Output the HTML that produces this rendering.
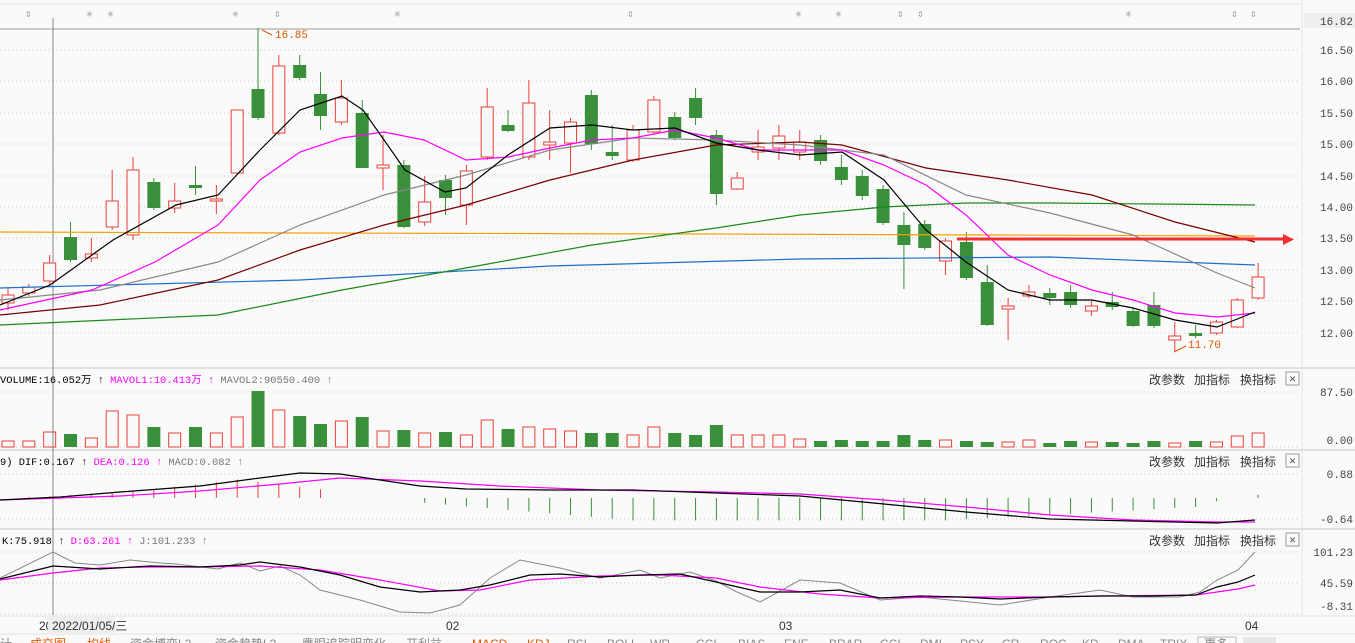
<!DOCTYPE html>
<html><head><meta charset="utf-8">
<style>
body{margin:0;background:#fafafa;width:1355px;height:643px;overflow:hidden;font-family:"Liberation Mono","Noto Sans CJK SC",monospace;}
svg{position:absolute;left:0;top:0}
.t{font-family:"Liberation Mono","Noto Sans CJK SC",monospace;font-size:11px}
.h{font-family:"Liberation Mono","Noto Sans CJK SC",monospace;font-size:10.4px}
.c{font-family:"Liberation Sans","Noto Sans CJK SC",sans-serif;font-size:12px;fill:#333}
</style></head><body>
<svg id="s" width="1355" height="643" xmlns="http://www.w3.org/2000/svg">
<rect width="1355" height="643" fill="#fafafa"/>
<line x1="1302" y1="0" x2="1302" y2="615" stroke="#e4e4e4"/>
<line x1="0" y1="4" x2="1300" y2="4" stroke="#e4e4e4"/>
<line x1="0" y1="29" x2="1300" y2="29" stroke="#999"/>
<line x1="0" y1="368" x2="1355" y2="368" stroke="#e0e0e0" stroke-width="2"/>
<line x1="0" y1="450" x2="1355" y2="450" stroke="#e0e0e0" stroke-width="2"/>
<line x1="0" y1="529" x2="1355" y2="529" stroke="#e0e0e0" stroke-width="2"/>
<line x1="0" y1="616" x2="1355" y2="616" stroke="#e0e0e0"/>
<line x1="0" y1="634" x2="1355" y2="634" stroke="#e0e0e0"/>
<g stroke="#ccc" stroke-dasharray="1,3">
<line x1="0" y1="50" x2="1300" y2="50"/><line x1="0" y1="81" x2="1300" y2="81"/><line x1="0" y1="113" x2="1300" y2="113"/><line x1="0" y1="144" x2="1300" y2="144"/><line x1="0" y1="176" x2="1300" y2="176"/><line x1="0" y1="207" x2="1300" y2="207"/><line x1="0" y1="238" x2="1300" y2="238"/><line x1="0" y1="270" x2="1300" y2="270"/><line x1="0" y1="301" x2="1300" y2="301"/><line x1="0" y1="333" x2="1300" y2="333"/>
<line x1="0" y1="392" x2="1300" y2="392"/><line x1="0" y1="447" x2="1300" y2="447"/>
<line x1="0" y1="474" x2="1300" y2="474"/><line x1="0" y1="519" x2="1300" y2="519"/>
<line x1="0" y1="552" x2="1300" y2="552"/><line x1="0" y1="583" x2="1300" y2="583"/><line x1="0" y1="614" x2="1300" y2="614"/>
</g>
<line x1="53" y1="18" x2="53" y2="615" stroke="#888"/>
<g id="cd"></g>
<g fill="none" stroke-width="1.2">
<polyline stroke="#f5a000" points="0,232 300,233 700,234 1000,235 1255,236"/>
<polyline stroke="#1a6fc8" points="0,288 300,280 550,266 800,259 1050,257 1255,265"/>
<polyline stroke="#1a8a1a" points="0,325 218,315 342,290 466,268 592,245 716,228 800,215 884,207 966,203 1050,203 1255,205"/>
<polyline stroke="#7a0000" points="0,315 100,305 218,280 300,250 384,225 466,205 550,180 633,160 716,145 800,142 842,145 926,168 1008,180 1092,195 1175,222 1255,242"/>
<polyline stroke="#888" points="0,300 100,290 218,262 300,225 384,195 466,175 550,150 633,138 716,140 800,145 884,155 966,195 1050,213 1133,235 1217,273 1255,288"/>
<polyline stroke="#ff00ff" points="0,310 92,290 155,262 218,225 260,180 300,152 342,138 384,132 424,140 466,160 508,157 550,148 592,140 633,138 675,130 716,138 758,150 800,150 842,150 884,165 926,185 966,215 1008,255 1050,275 1092,290 1133,300 1175,313 1217,317 1255,313"/>
<polyline stroke="#000" points="0,305 50,285 113,240 176,205 218,195 260,150 300,110 342,96 363,110 405,170 445,192 466,188 508,155 550,128 592,125 633,130 675,128 716,143 758,150 800,155 842,152 884,180 926,230 966,262 1008,290 1050,300 1092,300 1133,308 1175,320 1217,327 1255,312"/>
</g>
<line x1="957" y1="239" x2="1285" y2="239" stroke="#f03030" stroke-width="3"/>
<polygon points="1283,234 1294,239.5 1283,245" fill="#f03030"/>
<text x="275" y="38" class="t" fill="#e05a00">16.85</text>
<polyline points="262,30 272,35" stroke="#e05a00" fill="none"/>
<text x="1188" y="348" class="t" fill="#e05a00">11.70</text>
<polyline points="1174,352 1186,346" stroke="#e05a00" fill="none"/>
<g class="t" fill="#999" font-size="13">
<text x="25" y="17">⇕</text><text x="86" y="17">✳</text><text x="107" y="17">✳</text><text x="232" y="17">✳</text><text x="274" y="17">⇕</text><text x="394" y="17">✳</text><text x="627" y="17">⇕</text><text x="795" y="17">✳</text><text x="835" y="17">✳</text><text x="897" y="17">⇕</text><text x="917" y="17">⇕</text><text x="1125" y="17">✳</text><text x="1231" y="17">⇕</text><text x="1250" y="17">⇕</text>
</g>
<rect x="1304" y="13" width="51" height="15" fill="#eee"/>
<g class="t" fill="#444" text-anchor="end">
<text x="1353" y="25">16.82</text><text x="1353" y="54">16.50</text><text x="1353" y="85">16.00</text><text x="1353" y="117">15.50</text><text x="1353" y="148">15.00</text><text x="1353" y="180">14.50</text><text x="1353" y="211">14.00</text><text x="1353" y="242">13.50</text><text x="1353" y="274">13.00</text><text x="1353" y="305">12.50</text><text x="1353" y="337">12.00</text>
<text x="1353" y="396">87.50</text><text x="1353" y="444">0.00</text>
<text x="1353" y="478">0.88</text><text x="1353" y="523">-0.64</text>
<text x="1353" y="556">101.23</text><text x="1353" y="587">45.59</text><text x="1353" y="610">-8.31</text>
</g>
<text x="0" y="383" class="h"><tspan fill="#000">VOLUME:16.052万 ↑ </tspan><tspan fill="#f0f">MAVOL1:10.413万 ↑ </tspan><tspan fill="#777">MAVOL2:90550.400 ↑</tspan></text>
<text x="0" y="465" class="h"><tspan fill="#000">9) DIF:0.167 ↑ </tspan><tspan fill="#f0f">DEA:0.126 ↑ </tspan><tspan fill="#777">MACD:0.082 ↑</tspan></text>
<text x="2" y="544" class="h"><tspan fill="#000">K:75.918 ↑ </tspan><tspan fill="#f0f">D:63.261 ↑ </tspan><tspan fill="#777">J:101.233 ↑</tspan></text>
<g class="c">
<text x="1149" y="384">改参数</text><text x="1194" y="384">加指标</text><text x="1240" y="384">换指标</text>
<text x="1149" y="466">改参数</text><text x="1194" y="466">加指标</text><text x="1240" y="466">换指标</text>
<text x="1149" y="545">改参数</text><text x="1194" y="545">加指标</text><text x="1240" y="545">换指标</text>
</g>
<g fill="none" stroke="#999"><rect x="1286" y="372" width="13" height="13"/><rect x="1286" y="454" width="13" height="13"/><rect x="1286" y="533" width="13" height="13"/></g>
<g class="t" fill="#555" text-anchor="middle"><text x="1292.5" y="382">✕</text><text x="1292.5" y="464">✕</text><text x="1292.5" y="543">✕</text></g>
<g id="mb"></g>
<g fill="none" stroke-width="1.2">
<polyline stroke="#f0f" points="0,500 120,496 200,491 280,484 340,478 420,481 500,486 600,490 716,492 800,494 884,500 966,507 1050,515 1133,520 1217,522 1255,522"/>
<polyline stroke="#000" points="0,500 60,497 120,492 200,486 260,478 300,473 340,474 380,480 420,486 466,489 550,490 633,490 716,493 800,496 884,504 966,512 1050,519 1133,521 1217,523 1255,520"/>
<polyline stroke="#888" stroke-width="1" points="0,578 53,552 75,563 100,565 130,560 160,563 176,564 218,569 240,563 260,571 280,566 300,575 320,590 360,600 400,612 430,613 460,605 490,578 520,560 540,564 560,568 600,578 640,570 660,578 690,572 716,581 737,592 760,602 800,580 840,583 880,600 920,597 960,601 1000,605 1050,597 1100,590 1133,597 1180,597 1200,592 1217,580 1238,570 1255,552"/>
<polyline stroke="#f0f" points="0,580 53,573 100,568 150,567 200,567 260,566 320,570 380,580 440,591 480,590 530,580 600,576 660,575 716,578 760,587 820,594 880,598 960,597 1050,597 1100,596 1196,595 1238,589 1255,585"/>
<polyline stroke="#000" points="0,579 53,566 100,569 150,566 200,567 240,565 260,562 300,567 340,575 380,587 420,592 460,590 490,585 530,575 560,574 600,577 640,575 680,574 716,582 760,592 800,592 840,590 880,598 920,596 960,597 1000,599 1050,597 1100,596 1150,596 1196,595 1217,587 1238,582 1255,575"/>
</g>
<text x="39" y="630" class="c" fill="#000">20</text>
<rect x="48" y="617" width="67" height="17" fill="#eee"/>
<text x="52" y="630" class="c">2022/01/05/三</text>
<text x="446" y="630" class="c">02</text><text x="779" y="630" class="c">03</text><text x="1245" y="630" class="c">04</text>
<g class="c" font-size="12">
<text x="0" y="648" fill="#888">计</text><text x="30" y="648" fill="#e05a00">成交图</text><text x="87" y="648" fill="#e05a00">均线</text><text x="130" y="648" fill="#888">资金博弈L2</text><text x="215" y="648" fill="#888">资金趋势L2</text><text x="302" y="648" fill="#888">鹰眼追踪明变化</text><text x="406" y="648" fill="#888">开利益</text><text x="472" y="648" fill="#e05a00">MACD</text><text x="527" y="648" fill="#e05a00">KDJ</text><text x="567" y="648" fill="#888">RSI</text><text x="607" y="648" fill="#888">BOLL</text><text x="650" y="648" fill="#888">WR</text><text x="696" y="648" fill="#888">CCI</text><text x="738" y="648" fill="#888">BIAS</text><text x="784" y="648" fill="#888">ENE</text><text x="829" y="648" fill="#888">BRAR</text><text x="880" y="648" fill="#888">CCI</text><text x="920" y="648" fill="#888">DMI</text><text x="960" y="648" fill="#888">PSY</text><text x="1002" y="648" fill="#888">CR</text><text x="1040" y="648" fill="#888">ROC</text><text x="1082" y="648" fill="#888">KD</text><text x="1118" y="648" fill="#888">DMA</text><text x="1160" y="648" fill="#888">TRIX</text><text x="1204" y="648" fill="#888">更多</text><text x="1250" y="648" fill="#888">模板</text>
</g>
<rect x="1198" y="637" width="38" height="10" fill="none" stroke="#bbb"/>
<rect x="1243" y="637" width="33" height="10" fill="#e6e6e6"/>
</svg>
<script>
var C=[[295,303,287,310,1],[287,293,284,296,1],[263,281,255,285,1],[237,259,222,262,0],[254,258,238,262,1],[201,227,170,230,1],[170,235,157,240,1],[182,207,178,210,0],[201,208,183,213,1],[185,187,166,195,0],[199,201,185,214,1],[110,173,110,175,1],[89,117,28,120,0],[66,133,55,135,1],[65,77,55,80,0],[94,115,72,130,0],[98,122,80,125,1],[113,167,100,168,0],[165,168,135,190,1],[165,226,160,228,0],[202,222,176,226,1],[180,197,175,215,0],[171,205,165,225,1],[107,157,88,160,1],[125,130,110,132,0],[103,157,80,160,1],[142,145,110,160,1],[122,143,118,173,1],[95,143,90,150,0],[152,155,125,160,0],[130,160,125,162,1],[100,132,96,134,1],[117,137,112,140,0],[98,117,88,125,0],[135,193,130,205,0],[178,189,172,190,1],[147,152,130,160,1],[136,148,125,160,1],[142,152,130,160,1],[140,160,135,165,0],[167,179,155,185,0],[176,195,170,200,0],[189,222,185,225,0],[225,244,212,289,0],[224,247,220,250,0],[241,261,238,275,1],[242,277,232,280,0],[282,324,265,326,0],[306,309,298,340,1],[292,296,285,298,1],[293,297,288,305,0],[292,304,285,308,0],[306,311,300,316,1],[302,306,292,310,0],[311,325,308,327,0],[305,325,292,328,0],[336,340,322,352,1],[333,335,325,338,0],[322,333,320,335,1],[300,327,298,328,1],[277,298,263,300,1]];
var V=[6,6,15,13,9,36,32,20,14,20,14,30,56,37,31,23,26,30,16,17,14,15,12,27,18,20,18,16,14,14,12,20,14,12,22,12,12,12,8,6,7,6,6,12,7,7,6,5,5,7,4,6,5,5,4,6,4,6,5,11,14];
var ns="http://www.w3.org/2000/svg",g=document.getElementById('cd'),mb=document.getElementById('mb');
function el(p,t,a){var e=document.createElementNS(ns,t);for(var k in a)e.setAttribute(k,a[k]);p.appendChild(e);}
var R="#e8403a",G="#3a8f3a";
C.forEach(function(c,i){var x=8+i*20.835,up=c[4],col=up?R:G;
el(g,'line',{x1:x,y1:c[2],x2:x,y2:c[0],stroke:col});el(g,'line',{x1:x,y1:c[1],x2:x,y2:c[3],stroke:col});
var h=Math.max(c[1]-c[0],1);
if(up)el(g,'rect',{x:x-6,y:c[0],width:12,height:h,fill:'#fafafa',stroke:col});else el(g,'rect',{x:x-6.5,y:c[0],width:13,height:h+1,fill:col});
var v=V[i];if(up)el(g,'rect',{x:x-6,y:447-v,width:12,height:v,fill:'none',stroke:col});else el(g,'rect',{x:x-6.5,y:447-v,width:13,height:v,fill:col});
var m;if(i<6)m=-(i*0.6);else if(i<16)m=-(4+ (i<12?(i-6):(16-i))*1.5);else if(i<20)m=0;else m=3+Math.min(i-20,10)*1.1-(i>45?(i-45)*0.7:0);
if(i>57)m=(i-59)*-2;
if(Math.abs(m)>0.5)el(mb,'line',{x1:x,y1:498,x2:x,y2:498+m*1.6,stroke:m<0?R:G});
});
</script>
</body></html>
